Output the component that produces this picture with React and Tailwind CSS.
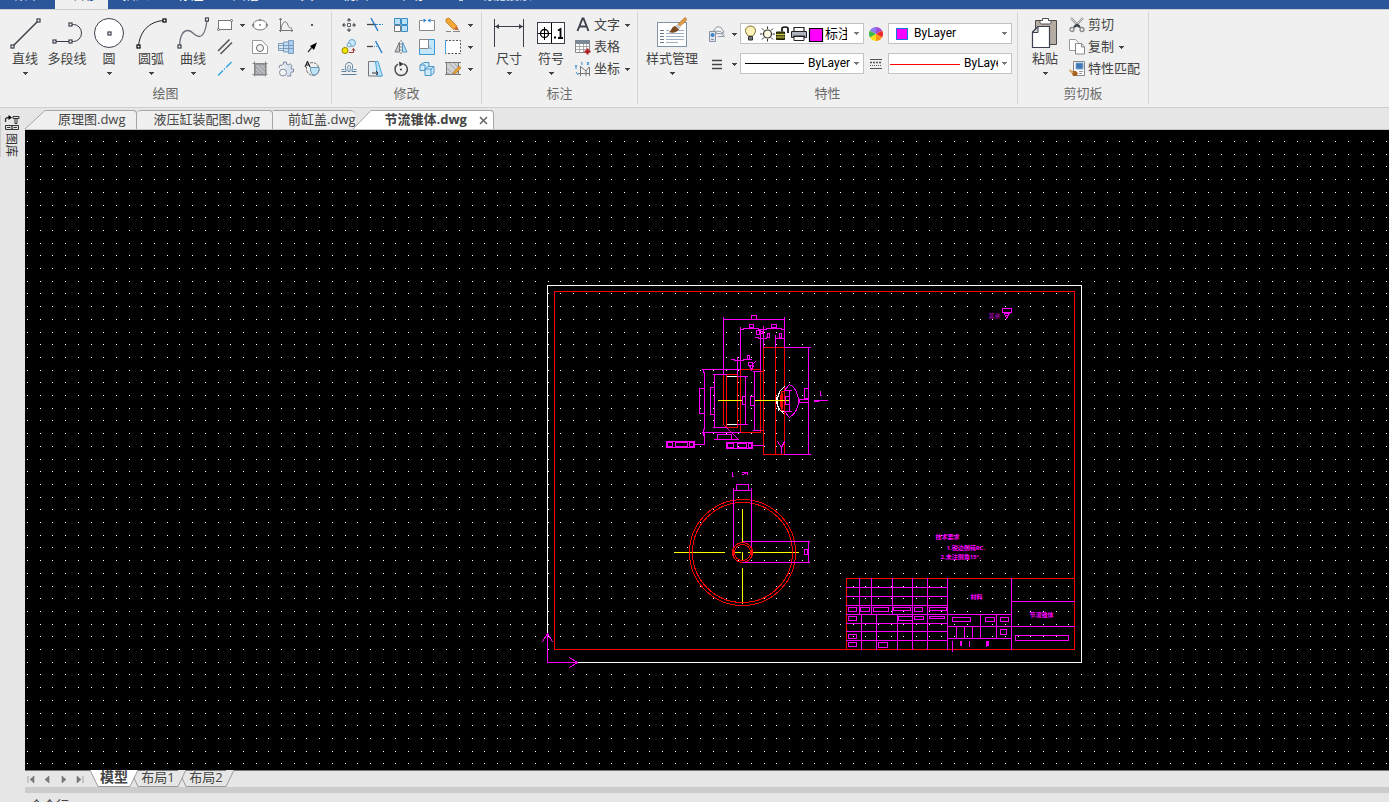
import React from 'react';

const MENUS = ['菜单', '常用', '插入', '标注', '图幅', '工具', '视图', '帮助'];

// Grid points of the model space
const GRID_STEP = 12.7;
const gridPath = (() => {
  let d = '';
  for (let r = 0; r < 90; r++) {
    for (let c = 0; c < 170; c++) {
      d += `M${Math.round(2 + c * GRID_STEP)} ${Math.round(11 + r * GRID_STEP)}h1v1h-1z`;
    }
  }
  return d;
})();

function Caret({ className = 'text-[#444]' }) {
  return (
    <svg width="5" height="3" viewBox="0 0 5 3" className={`shrink-0 ${className}`} shapeRendering="crispEdges">
      <path d="M0 0h5L3 3H2z" fill="currentColor" />
    </svg>
  );
}

function Svg({ size = 16, children }) {
  return (
    <svg
      width={size}
      height={size}
      viewBox={`0 0 ${size} ${size}`}
      fill="none"
      stroke="#5a5f69"
      strokeWidth="1"
      className="block shrink-0"
    >
      {children}
    </svg>
  );
}

// Square grip drawn on the end points of big icons
function Grip({ x, y, color = '#3b3f4a' }) {
  return <rect x={x - 1.5} y={y - 1.5} width="3" height="3" fill="#fff" stroke={color} strokeWidth="1.2" />;
}

/* ---------- big icons (32px) ---------- */
const BIG = {
  line: (
    <Svg size={32}>
      <path d="M3.5 29.5L29.5 3.5" stroke="#3b3f4a" strokeWidth="1.4" />
      <Grip x={3.5} y={29.5} />
      <Grip x={29.5} y={3.5} />
    </Svg>
  ),
  polyline: (
    <Svg size={32}>
      <path d="M19.5 7.5h3a8 8.5 0 0 1 0 17h-19" stroke="#3b3f4a" />
      <Grip x={19.5} y={7.5} />
      <Grip x={3.5} y={24.5} />
      <Grip x={19.5} y={24.5} />
    </Svg>
  ),
  circle: (
    <Svg size={32}>
      <circle cx="16" cy="16" r="14.5" fill="#fff" stroke="#3b3f4a" />
      <Grip x={16.5} y={16.5} />
    </Svg>
  ),
  arc: (
    <Svg size={32}>
      <path d="M3.5 29.5C4.500 15 14 4 29.5 3.500" stroke="#222" />
      <Grip x={3.5} y={29.5} color="#000" />
      <Grip x={29.5} y={3.5} color="#000" />
    </Svg>
  ),
  curve: (
    <Svg size={32}>
      <path d="M2.500 29.500C3 17 7 13.500 11 13.500C16 13.500 17 19.500 22 19.500C27 19.500 29 12 30 3" stroke="#6b6f7a" strokeWidth="1.300" />
      <Grip x={2.5} y={29.5} />
      <Grip x={30} y={2.5} />
    </Svg>
  ),
  dimension: (
    <Svg size={32}>
      <path d="M1.500 2v28M30.500 2v28M2 9.500h28" stroke="#3b3f4a" />
      <path d="M2 9.500l4-2.500v5zM30 9.500l-4-2.500v5z" fill="#3b3f4a" stroke="none" />
    </Svg>
  ),
  symbol: (
    <Svg size={32}>
      <rect x="2.500" y="5.500" width="27" height="21" fill="#fff" stroke="#3b3f4a" />
      <path d="M16.500 6v20M9.500 10v13M3 16.500h13" stroke="#000" />
      <circle cx="9.500" cy="16.500" r="4" stroke="#000" strokeWidth="1.300" />
      <path d="M19 19.500h2v2h-2z" fill="#000" stroke="none" />
      <path d="M23 13.500l2.500-1.500v9.500M23 21h5" stroke="#000" strokeWidth="1.800" />
    </Svg>
  ),
  styles: (
    <Svg size={32}>
      <rect x="1.500" y="5.500" width="29" height="24" fill="#fff" stroke="#7f93a8" />
      <path d="M4 13.500h4M4 16.500h4M4 19.500h4M4 22.500h4M4 25.500h4" stroke="#6d7785" />
      <path d="M10 13.500h3M21 13.500h7M10 16.500h18M10 19.500h18M10 22.500h18M10 25.500h12" stroke="#9fb0c4" />
      <path d="M22 7l7-6.500 1.500 1L30 4l-7 6z" fill="#e19a45" stroke="#a86a24" strokeWidth=".6" />
      <path d="M21 7l4 3-2 2.500-4-3z" fill="#c9cdd2" stroke="none" />
      <path d="M12.500 15c3-.5 2.500-5 6.500-6l4 3.500c-2 3-6 4-10.500 2.500z" fill="#7a4a22" stroke="none" />
    </Svg>
  ),
  paste: (
    <Svg size={32}>
      <path d="M6.500 3.500h21v24h-21z" fill="#b5ada3" stroke="#4c4a4a" />
      <path d="M11 5.500v-2h2.500v-2h6v2H22v2c0 1-1 1.500-2 1.500h-7c-1 0-2-.5-2-1.500z" fill="#fff" stroke="#4c4a4a" />
      <path d="M3.500 15l5.500-5.500H20.500v21h-17z" fill="#fff" stroke="#3c4050" strokeWidth="1.200" />
      <path d="M3.500 15.500h5.500V10z" fill="#d5d5d5" stroke="#3c4050" />
    </Svg>
  ),
};

/* ---------- small icons (16px) ---------- */
const ICON = {
  rect: (
    <Svg>
      <rect x="1.500" y="3.500" width="13" height="9" fill="#fff" stroke="#777" />
      <circle cx="1.500" cy="12.500" r="1" fill="#fff" />
      <circle cx="14.500" cy="3.500" r="1" fill="#fff" />
    </Svg>
  ),
  ellipse: (
    <Svg>
      <ellipse cx="8" cy="8" rx="7" ry="5" fill="#fff" stroke="#777" />
      <path d="M0.500 7.500h1.500v1.500h-1.500zM7.500 7.500h1v1h-1zM7.500 2.500h1v1h-1zM14 7.500h1.500v1.500h-1.500z" fill="#fff" strokeWidth=".7" />
    </Svg>
  ),
  formula: (
    <Svg>
      <path d="M2.500 1v14M1 13.500h14M3 13c1-9 5-10 6.500-6s2 4 4.500 4" stroke="#777" />
      <path d="M1 3l1.500-2L4 3M13 12l2 1.500-2 1.500" stroke="#777" strokeWidth=".8" />
    </Svg>
  ),
  point: (
    <Svg>
      <path d="M7 7h2v2H7z" fill="#555" stroke="none" />
    </Svg>
  ),
  parallel: (
    <Svg>
      <path d="M1 12L12.500 .500M3.500 15L15 3.500" stroke="#555" strokeWidth="1.500" />
    </Svg>
  ),
  profile: (
    <Svg>
      <path d="M.500 14.500v-13h9.500l5.500 6v7z" fill="#fff" stroke="#999" />
      <circle cx="8" cy="9" r="3.500" fill="#f5f5f5" stroke="#666" />
    </Svg>
  ),
  shaft: (
    <Svg>
      <path d="M.500 4.500h5v7h-5z" fill="#dceaf8" stroke="#7f9dbb" />
      <path d="M5.500 3h5v10h-5z" fill="#c2dcf3" stroke="#7f9dbb" />
      <path d="M10.500 1.500h5v13h-5z" fill="#a9cdee" stroke="#7f9dbb" />
      <path d="M1 6.500h14M1 9.500h14" stroke="#6f8fb0" strokeWidth=".8" />
    </Svg>
  ),
  arrow: (
    <Svg>
      <path d="M4 13l5-6" stroke="#333" strokeWidth="1.200" />
      <path d="M13 3.500L6 7l4 4z" fill="#000" stroke="none" />
    </Svg>
  ),
  centerline: (
    <Svg>
      <path d="M1 14.500l5-5M7 8.500l1-1M9 6.500L14.500 1" stroke="#29a3e0" strokeWidth="1.300" />
    </Svg>
  ),
  hatch: (
    <Svg>
      <path d="M3 3h11v11H3z" fill="#b5b8bd" stroke="#777" />
      <path d="M3 5l9 9M3 9l5 5M6 3l8 8M10 3l4 4" stroke="#8b8f96" strokeWidth=".7" />
      <path d="M.500 2.500h15M.500 13.500h15M2.500 .500v15M13.500 .500v15" stroke="#888" />
    </Svg>
  ),
  gear: (
    <Svg>
      <path d="M5.500 1h3v2l2 .8 1.800-1 1.700 2-1 1.700.5 1.500h2v3h-2l-1 1.500.5 2.500h-4M1 7l1-3 2 .5L5.500 3V1" fill="#d9e2f1" stroke="#7f8da3" />
      <circle cx="5" cy="11.500" r="3.500" fill="#f5f5f5" stroke="#7f8da3" />
    </Svg>
  ),
  detail: (
    <Svg>
      <path d="M6 2c5-1.500 9 2 9 6.500S11 15.500 7 14 2 9 2.500 6" stroke="#666" strokeDasharray="3 1" />
      <path d="M6.500 6.500H15c.5 5-3 8-6 7.500-1.500-1.500-3-4-2.500-7.500z" fill="#bfe3f8" stroke="#6a93ad" />
      <path d="M1 6L3.500 .500 6 6M2 4h3" stroke="#222" strokeWidth="1.200" />
    </Svg>
  ),
  move: (
    <Svg>
      <path d="M6.500 6.500h3v3h-3z" />
      <path d="M8 1l2.500 2.500h-5zM8 15l2.500-2.500h-5zM1 8l2.500-2.500v5zM15 8l-2.500-2.500v5z" fill="#4a4f58" stroke="none" />
      <path d="M8 3v2M8 11v2M3 8h2M11 8h2" />
    </Svg>
  ),
  trim: (
    <Svg>
      <path d="M0 7.500h9" stroke="#444" strokeWidth="1.300" />
      <path d="M9 7.500h7" stroke="#2a8ad4" strokeDasharray="2 1" />
      <path d="M4 1l7 13" stroke="#2a7ec8" strokeWidth="1.500" />
    </Svg>
  ),
  array: (
    <Svg>
      <path d="M1.500 1.500h6v6h-6zM8.500 8.500h6v6h-6zM8.500 1.500h6v6h-6z" fill="#b9e2fa" stroke="#3a8cc4" />
      <path d="M1.500 8.500h6v6h-6z" fill="#fff" stroke="#777" />
    </Svg>
  ),
  breakPoint: (
    <Svg>
      <path d="M4 3.500H.500v10h15v-10H12" fill="#fff" stroke="#888" />
      <path d="M4.500 1.500l3 2-3 2zM11.500 1.500l-3 2 3 2z" fill="#1f7fce" stroke="none" />
    </Svg>
  ),
  erase: (
    <Svg>
      <path d="M1 2l3-1 8 8-3.500 3.500L1 5z" fill="#f1a637" stroke="#c67c1a" strokeWidth=".8" />
      <path d="M8.500 12.500L12 9l2 4.500z" fill="#c4703c" stroke="none" />
      <path d="M1 14.500h5M8 14.500h7" stroke="#888" />
    </Svg>
  ),
  copyMove: (
    <Svg>
      <circle cx="11" cy="4" r="3.500" fill="#c7e8fb" stroke="#6fa6ca" />
      <circle cx="8" cy="6" r="2" fill="#e2f3fd" stroke="#6fa6ca" />
      <circle cx="4" cy="11.500" r="3" fill="#f5e700" stroke="#8f8600" />
      <path d="M8 13.500h4.500V10M11 11.500l1.500-2 1.500 2" stroke="#a3342c" />
    </Svg>
  ),
  extend: (
    <Svg>
      <path d="M0 7.500h6" stroke="#444" strokeWidth="1.300" />
      <path d="M7 7.500h4" stroke="#2a8ad4" strokeDasharray="1 1" />
      <path d="M8.500 2l6.500 12" stroke="#2a7ec8" strokeWidth="1.500" />
    </Svg>
  ),
  mirror: (
    <Svg>
      <path d="M6.500 3v10H2z" fill="#c5ccd4" stroke="#777" />
      <path d="M9.500 3v10H14z" fill="#b9e2fa" stroke="#5599c4" />
      <path d="M8 1v14" stroke="#888" strokeDasharray="2 1" />
    </Svg>
  ),
  scale: (
    <Svg>
      <path d="M.500 .500h15v15H.500z" fill="#c3e6fb" stroke="#3f9ad4" />
      <path d="M.500 .500h9v9h-9z" fill="#fff" stroke="#888" />
      <path d="M10 9.500l2-3M10 9.500h3" stroke="#8cc4e8" />
    </Svg>
  ),
  block: (
    <Svg>
      <path d="M.500 1.500h15v13H.500z" fill="#fff" stroke="#555" strokeDasharray="2 1.500" />
      <path d="M.500 1.500v13" stroke="#4aa3dc" />
    </Svg>
  ),
  offset: (
    <Svg>
      <path d="M.500 10.500H5V9C3.500 4.500 5 1.500 8 1.500S12.500 4.500 11 9v1.500h4.500M.500 13.500h15" stroke="#5c7f9c" />
      <path d="M.500 8.500h3M12.500 8.500h3M7 10.500h2V9C10 6 9.500 4.500 8 4.500S6.500 6 7 9z" stroke="#6c93b3" />
    </Svg>
  ),
  stretch: (
    <Svg>
      <path d="M1.500 .500h7l6 14.500h-13z" fill="#e3eef5" stroke="#777" />
      <path d="M8.500 .500H11L15.500 15h-5z" fill="#b9e2fa" stroke="#4aa3dc" />
      <path d="M5 12h6M9 10l2 2-2 2" stroke="#333" />
    </Svg>
  ),
  rotate: (
    <Svg>
      <path d="M5 3a6.200 6.200 0 1 0 6-.2" stroke="#444" strokeWidth="1.400" />
      <path d="M6 .500l5 2.500-4.500 2.500z" fill="#333" stroke="none" />
      <circle cx="8" cy="8.500" r="1" fill="#333" stroke="none" />
    </Svg>
  ),
  explode: (
    <Svg>
      <path d="M1 4l4-2.500h5V7L6 9.500H1z" fill="#cfeafb" stroke="#4b97c8" />
      <path d="M6 8l3-2.500h6V12l-3 2.500H6z" fill="#cfeafb" stroke="#4b97c8" />
      <path d="M6 8h6v6.500M12 8l3-2.500M1 4h5v5" stroke="#4b97c8" />
    </Svg>
  ),
  hatchEdit: (
    <Svg>
      <path d="M1.500 1.500h12v12h-12z" fill="#cfd1d4" stroke="#777" />
      <path d="M1 6l8 8M1 10l4 4M4 2l9 9M9 2l5 5" stroke="#999" strokeWidth=".7" />
      <path d="M0 1.500h16M0 13.500h16" stroke="#777" />
      <path d="M14.500 5L9 10.500 8 13l3-1 5-5z" fill="#e9a23a" stroke="#b57212" strokeWidth=".7" />
    </Svg>
  ),
  text: (
    <Svg>
      <path d="M2.500 14L7.500 1.500h1L13.500 14M4.500 9.500h7" stroke="#3d424d" strokeWidth="1.900" />
    </Svg>
  ),
  table: (
    <Svg>
      <path d="M.500 1.500h14v12H.500z" fill="#fff" stroke="#888" />
      <path d="M.500 1.500h14v3H.500z" fill="#7d8896" stroke="#7d8896" />
      <path d="M1 7.500h13M1 10.500h13M4.500 5v8M8.500 5v8M11.500 5v8" stroke="#aaa" />
      <path d="M12.500 9.500v6M9.500 12.500h6" stroke="#b3161b" strokeWidth="2" />
    </Svg>
  ),
  coord: (
    <Svg>
      <path d="M5.500 5v10M3 12.500h12M6 6l5 4 3-4M11 10v5M14.500 6v9" stroke="#777" />
      <path d="M0 4l1 2 1-2M1 6v2M6 1.500h1V4M12 1l2 3M14 1l-2 3M1 11l2 3" stroke="#2a8ad4" strokeWidth=".9" />
    </Svg>
  ),
  layers: (
    <Svg>
      <path d="M4.500 4.500l3-3.500h4l3.500 5-3 1.500h-4z" fill="#f5f5f5" stroke="#9099a5" />
      <path d="M5 7.500l7 0 3.500 3H9M5.500 5l6 .5 4 3" stroke="#9099a5" />
      <path d="M.500 5.500h6v10h-6z" fill="#dfe5ee" stroke="#8995a5" />
      <path d="M2 13.500h3" stroke="#8995a5" />
      <circle cx="3.500" cy="9" r="2" fill="#3c81c4" stroke="none" />
    </Svg>
  ),
  lines: (
    <Svg>
      <path d="M3 4.500h10M3 8.500h10M3 12.500h10" stroke="#444" strokeWidth="1.300" />
    </Svg>
  ),
  wheel: (
    <Svg>
      <g stroke="none">
        <path d="M8 8V1A7 7 0 0 1 14.060 4.500z" fill="#a64ad6" />
        <path d="M8 8l6.060-3.500a7 7 0 0 1 0 7z" fill="#ee2b23" />
        <path d="M8 8l6.060 3.500A7 7 0 0 1 8 15z" fill="#ff9416" />
        <path d="M8 8v7a7 7 0 0 1-6.060-3.500z" fill="#f6de19" />
        <path d="M8 8l-6.060 3.500a7 7 0 0 1 0-7z" fill="#3fbb45" />
        <path d="M8 8L1.940 4.500A7 7 0 0 1 8 1z" fill="#8a7df0" />
      </g>
    </Svg>
  ),
  linetype: (
    <Svg>
      <path d="M2 3.500h12M2 12.500h12" stroke="#555" />
      <path d="M2 6.500h12" stroke="#555" strokeWidth="1.500" strokeDasharray="2 1" />
      <path d="M2 9.500h12" stroke="#555" strokeDasharray="1 1" />
    </Svg>
  ),
  cut: (
    <Svg>
      <path d="M2 1l8.500 9M14 1L5.500 10" stroke="#888" strokeWidth="2.200" />
      <path d="M2 1l8.500 9M14 1L5.500 10" stroke="#fff" strokeWidth=".8" />
      <path d="M5 8.500L8 6.500l3 2 1 3-4-2-4 2z" fill="#3d424d" stroke="none" />
      <circle cx="3" cy="12.500" r="2" stroke="#888" strokeWidth="1.300" />
      <circle cx="13" cy="12.500" r="2" stroke="#888" strokeWidth="1.300" />
    </Svg>
  ),
  copy: (
    <Svg>
      <path d="M.500 .500h6l3 3v8h-9z" fill="#fff" stroke="#999" />
      <path d="M6.500 4.500h6l3 3.500v7h-9z" fill="#fff" stroke="#888" />
      <path d="M12.500 4.500V8h3" stroke="#888" />
    </Svg>
  ),
  match: (
    <Svg>
      <path d="M4.500 .500h11v14h-11z" fill="#fff" stroke="#888" />
      <path d="M7 2h7v6H7z" fill="#3f78b5" stroke="#7ea6cf" />
      <path d="M10 10.500h4M10 12.500h3" stroke="#999" />
      <path d="M2 10l5 0 2 2.500-2 2.500H4z" fill="#a8621e" stroke="none" />
      <path d="M.500 9l3.500 3" stroke="#d9a566" strokeWidth="2" />
    </Svg>
  ),
};

function BigButton({ icon, label, caret = true, wide = false }) {
  return (
    <button type="button" className={`flex flex-col items-center pt-[5px] ${wide ? 'w-15' : 'w-[42px]'}`}>
      {BIG[icon]}
      <span className="whitespace-nowrap text-[13px] leading-[18px]">{label}</span>
      <span className="flex h-3 items-center">{caret && <Caret />}</span>
    </button>
  );
}

function IconButton({ name, caret = false }) {
  return (
    <button type="button" aria-label={name} className="flex h-[22px] items-center justify-center">
      {ICON[name]}
      {caret && <span className="ml-[7px]"><Caret /></span>}
    </button>
  );
}

function TextButton({ icon, label, caret = false }) {
  return (
    <button type="button" className="flex h-[22px] items-center">
      {ICON[icon]}
      <span className="ml-[3px] whitespace-nowrap pb-0.5 text-[13px] leading-5">{label}</span>
      {caret && <span className="ml-[5px]"><Caret /></span>}
    </button>
  );
}

function Group({ title, className, bodyClass, children }) {
  return (
    <section className={`flex shrink-0 flex-col border-r border-[#d4d4d4] ${className}`}>
      <div className={`flex h-[72px] ${bodyClass}`}>{children}</div>
      <h2 className="pb-0.5 text-center text-[13px] leading-[18px] text-[#6a6a6a]">{title}</h2>
    </section>
  );
}

function Combo({ label, value, textClass = '', children }) {
  return (
    <label className="flex h-[21px] w-31 items-center overflow-hidden border border-[#c3c3c3] bg-white">
      {children}
      <select
        aria-label={label}
        className={`h-[19px] min-w-0 flex-1 appearance-none bg-transparent font-['Roboto','Noto_Sans_CJK_SC',sans-serif] text-[12px] leading-[19px] text-black outline-none ${textClass}`}
      >
        <option>{value}</option>
      </select>
      <span className="flex w-[13px] shrink-0 justify-center"><Caret className="text-[#777]" /></span>
    </label>
  );
}

function LayerIcons() {
  return (
    <svg width="80" height="19" viewBox="0 0 80 19" fill="none" className="ml-1 shrink-0">
      {/* bulb */}
      <path d="M3.500 12C1 9.500 .500 8 .500 6.500a5 4.500 0 0 1 10 0c0 1.500-.5 3-3 5.500z" fill="#fff3ba" stroke="#7d6c25" />
      <path d="M3.500 12.500h4v3.500h-4z" fill="#777" stroke="#333" />
      {/* sun */}
      <circle cx="22.500" cy="10" r="4" fill="#fffbe0" stroke="#333" strokeWidth="1.200" />
      <path d="M22.500 2.500V5M22.500 15v2.500M15 10h2.500M27.500 10H30M17 4.500l2 2M28 4.500l-2 2M17 15.500l2-2M28 15.500l-2-2" stroke="#333" />
      {/* lock */}
      <path d="M31.500 8h8v7.500h-8z" fill="#4a4a0c" stroke="#1c1c00" />
      <path d="M31 10.500h9M31 13h9" stroke="#c9c95a" />
      <path d="M37 7.500V4.500c0-2 6-2 6 0V9" stroke="#111" strokeWidth="1.700" />
      {/* printer */}
      <path d="M49 7V3.500h10V7" fill="#fff" stroke="#222" strokeWidth="1.200" />
      <path d="M46.500 7.500h15v6h-2v-1.500h-11v1.500h-2z" fill="#aeb5be" stroke="#222" />
      <path d="M49 12.500h10v4H49z" fill="#fff" stroke="#222" />
      {/* layer colour */}
      <path d="M64.500 4.500h13v13h-13z" fill="#ff00ff" stroke="#000" strokeWidth="1.200" />
    </svg>
  );
}

function Ribbon() {
  return (
    <div className="flex shrink-0 overflow-hidden border-t border-b border-t-[#cfcfcf] border-b-[#cfcfcf] bg-[#f0f0f0] pt-0.5 pb-[3px] text-[#444]">
      <Group title="绘图" className="w-[332px]" bodyClass="pl-1">
        <BigButton icon="line" label="直线" />
        <BigButton icon="polyline" label="多段线" caret={false} />
        <BigButton icon="circle" label="圆" />
        <BigButton icon="arc" label="圆弧" />
        <BigButton icon="curve" label="曲线" />
        <div className="flex pt-0.5">
          <div className="flex w-[33px] flex-col items-start pl-[3px]">
            <IconButton name="rect" caret />
            <IconButton name="parallel" />
            <IconButton name="centerline" caret />
          </div>
          <div className="grid grid-cols-[26px_26px_26px] content-start">
            {['ellipse', 'formula', 'point', 'profile', 'shaft', 'arrow', 'hatch', 'gear', 'detail'].map(n => (
              <IconButton key={n} name={n} />
            ))}
          </div>
        </div>
      </Group>

      <Group title="修改" className="w-[150px]" bodyClass="pl-1">
        <div className="grid grid-cols-[26px_26px_26px_26px_37px] content-start pt-0.5">
          {['move', 'trim', 'array', 'breakPoint', 'erase',
            'copyMove', 'extend', 'mirror', 'scale', 'block',
            'offset', 'stretch', 'rotate', 'explode', 'hatchEdit'].map((n, i) => (
            <IconButton key={n} name={n} caret={i % 5 === 4} />
          ))}
        </div>
      </Group>

      <Group title="标注" className="w-39" bodyClass="pl-[6px]">
        <BigButton icon="dimension" label="尺寸" />
        <BigButton icon="symbol" label="符号" />
        <div className="flex flex-col pt-0.5 pl-[3px]">
          <TextButton icon="text" label="文字" caret />
          <TextButton icon="table" label="表格" />
          <TextButton icon="coord" label="坐标" caret />
        </div>
      </Group>

      <Group title="特性" className="w-95" bodyClass="pl-1">
        <BigButton icon="styles" label="样式管理" wide />
        <div className="ml-[7px] flex w-[31px] flex-col items-start gap-2 pt-[11px]">
          <IconButton name="layers" caret />
          <IconButton name="lines" caret />
        </div>
        <div className="flex flex-col gap-[9px] pt-[11px]">
          <Combo label="图层" value="标注层" textClass="mr-[3px] text-[13px]">
            <LayerIcons />
          </Combo>
          <Combo label="线型" value="ByLayer" textClass="pl-1">
            <span className="ml-1 h-px w-[59px] shrink-0 bg-black" />
          </Combo>
        </div>
        <div className="flex w-6 flex-col gap-2 pt-[11px]">
          <IconButton name="wheel" />
          <IconButton name="linetype" />
        </div>
        <div className="flex flex-col gap-[9px] pt-[11px]">
          <Combo label="颜色" value="ByLayer" textClass="pl-[6px]">
            <span className="ml-[7px] size-3 shrink-0 border border-[#0a78d6] bg-[#ff00ff]" />
          </Combo>
          <Combo label="线宽" value="ByLayer" textClass="pl-1">
            <span className="mt-0.5 ml-px h-px w-[70px] shrink-0 bg-[#ff0000]" />
          </Combo>
        </div>
      </Group>

      <Group title="剪切板" className="w-[131px]" bodyClass="pl-[6px]">
        <BigButton icon="paste" label="粘贴" />
        <div className="flex flex-col pt-0.5 pl-[3px]">
          <TextButton icon="cut" label="剪切" />
          <TextButton icon="copy" label="复制" caret />
          <TextButton icon="match" label="特性匹配" />
        </div>
      </Group>
    </div>
  );
}

function DocTabs() {
  const tab = 'flex h-[19px] items-center border-t border-[#a5a5a5] bg-[#f0f0f0] pb-0.5 whitespace-nowrap';
  return (
    <nav className="flex h-[22px] shrink-0 items-end border-b border-[#c4c4c4] bg-[#e6e6e6] text-[13px] leading-[18px] text-[#444]">
      <svg width="20" height="19" viewBox="0 0 20 19" className="shrink-0">
        <path d="M0 19L20 .500V19z" fill="#f0f0f0" />
        <path d="M0 19L20 .500" stroke="#a5a5a5" />
      </svg>
      <button type="button" className={`${tab} rounded-tr-sm border-r pr-[10px] pl-[13px]`}>原理图.dwg</button>
      <button type="button" className={`${tab} rounded-t-sm border-r pr-3 pl-[17px]`}>液压缸装配图.dwg</button>
      <button type="button" className={`${tab} rounded-tr-md pl-[15px]`}>前缸盖.dwg</button>
      <svg width="18" height="19" viewBox="0 0 18 19" className="z-10 -ml-[3px] shrink-0">
        <path d="M0 19L18 .500V19z" fill="#fff" />
        <path d="M0 19L18 .500" stroke="#a5a5a5" />
      </svg>
      <div className="flex h-[19px] items-center rounded-tr-sm border-t border-r border-[#a5a5a5] bg-white pr-[5px] pl-[14px]">
        <button type="button" className="pb-0.5 font-bold whitespace-nowrap">节流锥体.dwg</button>
        <button type="button" aria-label="关闭" className="ml-3">
          <svg width="9" height="9" viewBox="0 0 9 9" stroke="#666" strokeWidth="1.500">
            <path d="M1 1l7 7M8 1L1 8" />
          </svg>
        </button>
      </div>
    </nav>
  );
}

// [x, y, w, h] frames around dimension values
const DIM_BOXES = [
  [751, 315, 5, 4], [749, 324, 4, 3], [771, 324, 5, 3], [756, 330, 3, 4], [760, 331, 2, 2],
  [767, 333, 2, 4], [779, 333, 2, 4], [804, 388, 4, 10], [747, 355, 2, 4], [748, 362, 4, 3],
  [699, 388, 5, 25], [710, 387, 4, 27], [742, 396, 3, 8], [750, 396, 4, 9], [785, 396, 4, 8],
  [799, 399, 9, 3], [717, 434, 14, 5],
  [666, 441, 28, 6], [667, 442, 5, 4], [675, 442, 12, 4], [689, 442, 4, 4],
  [726, 442, 26, 6], [727, 443, 6, 4], [737, 443, 9, 4], [748, 443, 3, 4],
  [736, 484, 12, 6], [804, 549, 3, 5], [1002, 308, 9, 4],
];

const TITLE_BOXES = [
  [848, 607, 8, 4], [860, 607, 9, 4], [873, 607, 15, 4], [893, 607, 17, 3], [914, 607, 8, 4], [929, 607, 17, 3],
  [848, 616, 8, 4], [898, 616, 14, 4], [914, 616, 9, 3], [929, 616, 15, 2],
  [848, 634, 8, 4], [848, 642, 8, 4], [878, 642, 9, 5],
  [952, 617, 18, 4], [985, 617, 9, 4], [1000, 617, 8, 4], [1000, 629, 6, 5], [1015, 635, 53, 5],
];

const boxPath = boxes => boxes.map(([x, y, w, h]) => `M${x} ${y}h${w}v${h}h${-w}z`).join('');

function Drawing() {
  return (
    <svg className="block h-full w-full" fill="none" shapeRendering="crispEdges">
      <path d={gridPath} fill="#fff" />
      <g transform="translate(-24.5 -129.5)" strokeWidth="1" strokeLinecap="square">
        <path d="M547 285H1081V662H547z" stroke="#fff" />
        <path d="M554 291H1074V649H554zM846 649V578H1074" stroke="#f00" />

        {/* section view: outline */}
        <g stroke="#f00">
          <path d="M740 369V432M760 369V432M740 369H760M740 432H760M763 347V454M775 347V454M784 347V454M763 347H784M763 454H784" />
          <path d="M723 374H737V427H726L723 424zM726 374V427M760 371H763M760 430H763" />
          <path d="M781 391H784V410H781zM782 393V408M780 395V406" />
        </g>
        <path d="M727 376H737M727 424H737" stroke="#fff" />
        <path d="M784 386L779 391V393L777 396V405L779 409L783 413M776 397V403M778 393V396M778 407V410M781 411H783" stroke="#fff" />
        <path d="M718 400H741M754 400H789" stroke="#ff0" />

        {/* section view: dimensions */}
        <g stroke="#f0f">
          <path d="M723 317V374M723 319H784M784 317V347M740 327V369M760 329V369M763 326V347M775 335V347" />
          <path d="M740 329H743V328H758V329H766V328H781V329H784M755 337H758V338H766V337H769M775 338H784" />
          <path d="M784 347H810M808 347V454M784 454H810" />
          <path d="M731 359H734V360H743V359H751M737 357V374M749 365L751 369L753 365M753 363L755 361" />
          <path d="M702 369H740M703 369V372H704V429H703V435M702 432H740M704 432V444H695" />
          <path d="M713 374H726M714 374V427M713 427H726M737 376H747M745 376V424M737 424H747" />
          <path d="M754 371V430M753 371H760M753 430H760M726 427L738 439M714 439H738M753 445H763" />
          <path d="M784 390L789 384C795 387 798 395 798 400C798 407 795 413 789 417L784 411M789 390V411M784 390H791M784 411H791" />
          <path d="M820 391V395H821M814 400H827M814 401H818M777 441L781 447L784 441M781 447V453" />
        </g>

        {/* end view */}
        <path d="M674 552H724M735 552H740M748 552H798M742 509V542M742 552V559M742 568V603" stroke="#ff0" />
        <g stroke="#f00">
          <circle cx="742" cy="552" r="53" />
          <circle cx="742" cy="552" r="50" />
          <circle cx="742" cy="552" r="10" />
          <circle cx="742" cy="552" r="8" />
          <path d="M732 549V555M733 549V555M751 549V555M752 549V555" />
        </g>
        <g stroke="#f0f">
          <path d="M733 488V546M751 488V546M733 490H751M743 541H809M743 562H809M808 541V562" />
          <path d="M732 472V476H733M742 472H747V474M742 474H743M744 473H745" />
        </g>

        <path d={boxPath(DIM_BOXES)} stroke="#f0f" />
        <path d="M1004 313H1009L1006 318zM1005 315H1007M1012 308" stroke="#f0f" />

        {/* title block */}
        <g stroke="#f0f">
          <path d="M846 587H947M846 596H947M846 605H947M846 614H1011M846 623H947M846 631H947M846 640H947" />
          <path d="M859 578V614M871 578V614M892 578V614M912 578V649M927 578V649M947 578V649M1011 578V649" />
          <path d="M861 614V649M876 614V649M897 614V649M1011 601H1074M947 626H1074M947 638H1011" />
          <path d="M980 614V638M996 614V638M956 626V638M964 626V638M972 626V638M952 641V651M960 641V645M961 641V645M969 641V646M986 641V646M987 641V645M988 641V645" />
          <path d={boxPath(TITLE_BOXES)} />
        </g>
        <g fill="#f0f" fontSize="6" fontWeight="bold">
          <text x="935" y="538">技术要求</text>
          <text x="946" y="549">1.锐边倒钝RC.</text>
          <text x="940" y="558">2.未注倒角15°.</text>
          <text x="970" y="598">材料</text>
          <text x="1029" y="616">节流锥体</text>
          <text x="988" y="317" fill="#90009a">其余</text>
        </g>

        {/* UCS icon */}
        <path d="M547 633V662H577M542 641L547 633L552 641M569 657L577 662L569 667" stroke="#f0f" />
      </g>
    </svg>
  );
}

function SheetTab({ label, active = false }) {
  const fill = active ? '#fff' : '#e6e6e6';
  return (
    <button type="button" className={`flex h-[17px] items-stretch ${active ? 'z-10' : '-ml-1'}`}>
      {active ? (
        <svg width="8" height="17" viewBox="0 0 8 17">
          <path d="M0 0L8 16.500V0z" fill={fill} />
          <path d="M0 0L8 16.500" stroke="#999" />
        </svg>
      ) : (
        <svg width="4" height="17" viewBox="0 0 4 17">
          <path d="M0 8L4 16.500" stroke="#999" />
        </svg>
      )}
      <span
        className={`flex items-center justify-center border-b border-[#999] pb-0.5 leading-4 whitespace-nowrap ${
          active ? 'w-8 bg-white text-[14px] font-bold' : 'w-10 text-[13px]'
        }`}
      >
        {label}
      </span>
      <svg width="8" height="17" viewBox="0 0 8 17">
        <path d="M0 0V16.500L8 0z" fill={fill} />
        <path d="M0 16.500L8 0" stroke="#999" fill="none" />
      </svg>
    </button>
  );
}

function SheetBar() {
  const nav = [
    ['first', 'M1 1v7M7 1v7L3 4.500z'],
    ['previous', 'M6 1v7L2 4.500z'],
    ['next', 'M3 1v7l4-3.500z'],
    ['last', 'M2 1v7l4-3.500zM8 1v7'],
  ];
  return (
    <div className="flex h-[17px] shrink-0 items-start border-t border-[#777] text-[#444]">
      <div className="flex w-[65px] gap-[7px] pt-1 pl-[2px]">
        {nav.map(([name, d]) => (
          <button key={name} type="button" aria-label={name}>
            <svg width="9" height="9" viewBox="0 0 9 9" fill="#777" stroke="#777" strokeWidth=".6">
              <path d={d} />
            </svg>
          </button>
        ))}
      </div>
      <div className="-mt-px flex">
        <SheetTab label="模型" active />
        <SheetTab label="布局1" />
        <SheetTab label="布局2" />
      </div>
    </div>
  );
}

function App() {
  return (
    <div className="flex h-screen flex-col overflow-hidden bg-[#e6e6e6] font-['Open_Sans','Noto_Sans_CJK_SC',sans-serif]">
      <header className="flex h-[9px] shrink-0 items-end overflow-hidden bg-[#2b579a] text-[13px] text-white">
        {MENUS.map(m => (
          <button
            key={m}
            type="button"
            className={`shrink-0 pb-[7px] text-center leading-4 ${m === '常用' ? 'w-[53px] bg-[#f0f0f0] text-[#2b579a]' : 'w-[55px]'}`}
          >
            {m}
          </button>
        ))}
        <span className="ml-5 flex items-end gap-4 pb-[7px] leading-4 text-[#c9d3e3]">
          <svg width="6" height="14" viewBox="0 0 6 14" fill="#c9d3e3">
            <path d="M1 0h4v13H1z" />
          </svg>
          <span>功能搜索</span>
        </span>
      </header>

      <Ribbon />

      <div className="flex min-h-0 flex-1">
        <aside className="w-[25px] shrink-0 pt-[7px]">
          <button type="button" className="flex w-[22px] flex-col items-center border-l border-[#ccc] text-[#333]">
            <svg width="16" height="16" viewBox="0 0 16 16" fill="none" stroke="#333">
              <path d="M1.500 7V4.500C1.500 3 3 2.500 5 2.500" strokeWidth="1.300" />
              <path d="M4.500 0L8 2.500 4.500 5z" fill="#000" stroke="none" />
              <path d="M9 1.500h6v2H9zM11 3.500h2v5h-2zM1.500 10.500h13v4h-13zM3 12.500h3M10 12.500h3" />
              <circle cx="8" cy="12.500" r="1" />
            </svg>
            <span className="mt-0.5 mr-0.5 text-[12px] leading-4 [text-orientation:sideways] [writing-mode:vertical-rl]">图库</span>
          </button>
        </aside>

        <main className="flex min-w-0 flex-1 flex-col">
          <DocTabs />
          <div className="min-h-0 flex-1 overflow-hidden bg-black">
            <Drawing />
          </div>
          <SheetBar />
          <div className="h-[6px] shrink-0 bg-[#ccc]" />
          <div className="h-[9px] shrink-0 overflow-hidden pt-1 pl-[5px] text-[13px] leading-4 text-[#444]">命令行</div>
        </main>
      </div>
    </div>
  );
}

export default App;
